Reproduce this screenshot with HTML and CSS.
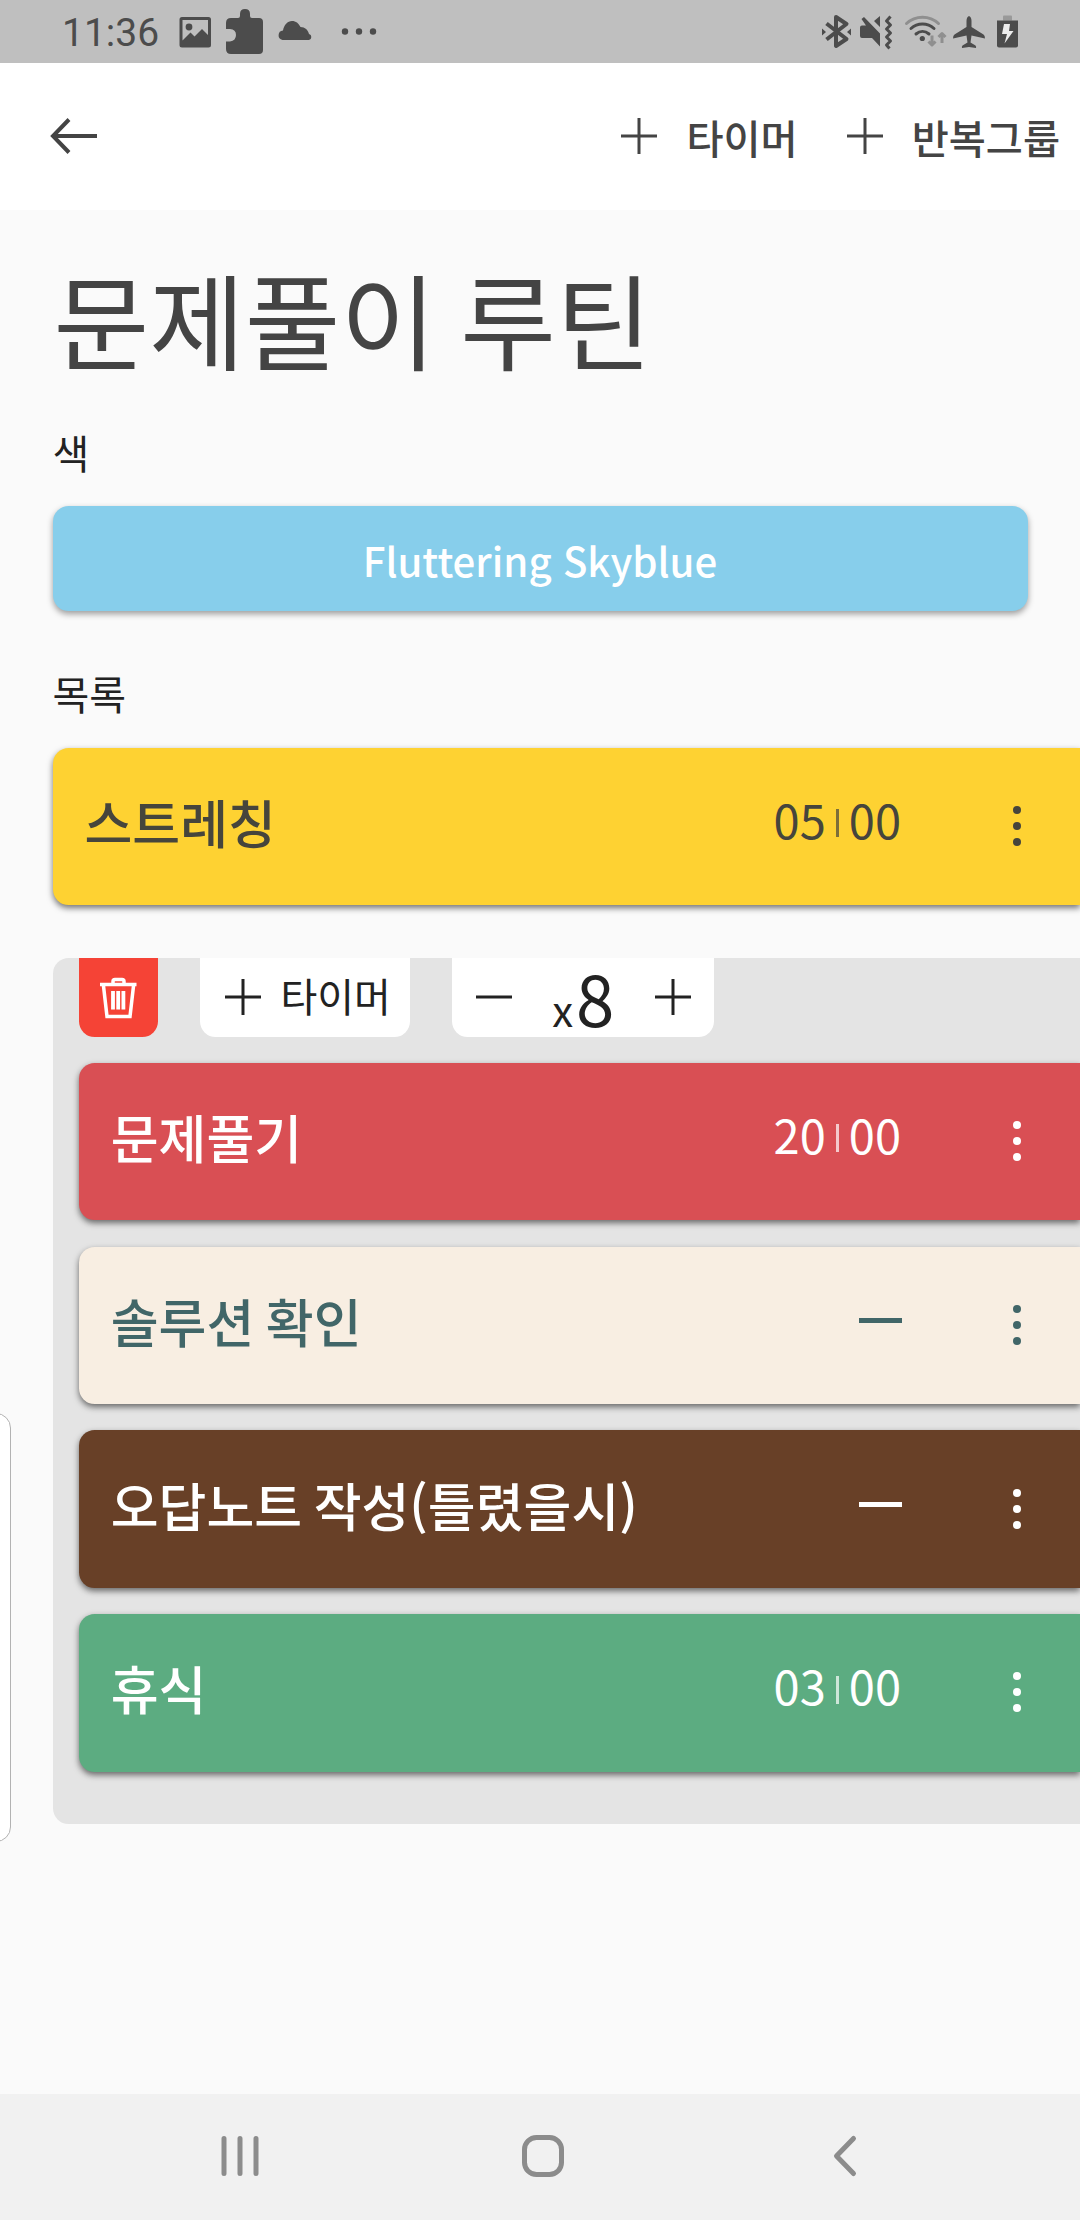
FILE: index.html
```html
<!DOCTYPE html>
<html lang="ko">
<head>
<meta charset="utf-8">
<title>문제풀이 루틴</title>
<link rel="stylesheet" href="styles.css">
</head>
<body>
<div class="screen">
  <header class="status">
    <span class="clock">11:36</span>
    <svg class="status-left" viewBox="170 0 220 63" width="220" height="63">
      <path fill-rule="evenodd" d="M182 17h26.500q2.500 0 2.500 2.500v25.500q0 2.500-2.500 2.500h-26.500q-2.500 0-2.500-2.500v-25.500q0-2.500 2.500-2.500zM182.500 20v20.500l8-8 4 4 7.500-7.500 6 6V20z"/>
      <circle cx="189" cy="27" r="3.400"/>
      <path d="M231 18h7q2 0 2-2v-2q0-5 5-5t5 5v2q0 2 2 2h7q4 0 4 4v28q0 4-4 4h-28q-5 0-5-5v-7.500h4q6-1 6-6.500t-6-6h-4V23q0-5 5-5z"/>
      <path d="M282.500 40a4.800 4.800 0 0 1 .5-9.500C284 25 287.500 21 292 21c4 0 6.500 2.300 8.500 6 4.500 0 7.500 3 8.500 7a3.100 3.100 0 0 1 0 6z"/>
      <circle cx="345" cy="31.500" r="3.200"/><circle cx="359" cy="31.500" r="3.200"/><circle cx="373" cy="31.500" r="3.200"/>
    </svg>
    <svg class="status-right" viewBox="815 0 265 63" width="265" height="63">
      <path class="line" d="M826.500 23.500l20 15.500-10.500 7V17l10.500 7-20 15.500"/>
      <path d="M822 28.500v7l4-3.500zM851 28.500v7l-4-3.500z"/>
      <path d="M862 25.500h4l-4.500-6.500 2.500-2 16 16.500v13l-8-8.500h-10q-2 0-2-2v-8.500q0-2 2-2zM874 21l6-5v11z"/>
      <path class="line thin" d="M890.500 16.500l-4 4.500 4 4-4 4 4 4-4 4 4 4-4 4 3 3.500"/>
      <path class="line arc dim" d="M906.500 23.500c9-8.500 23-8.500 32 0"/>
      <path class="line arc" d="M911 28.500c6.500-6 16.500-6 23 0M916 34c4-3.500 9-3.500 13 0"/>
      <circle cx="922.300" cy="38.500" r="2.600"/>
      <path class="line thin dim" d="M932 35.500v9M928.500 41.500l3.500 3.500 3.500-3.500M942 43v-9M938.500 37l3.500-3.500 3.500 3.500"/>
      <path d="M969 16q2.500 1 2.500 5v6l12 7.500q1.500 1 1.500 4l-13.500-3-1 7 5 3q1 1 .5 2.500l-7-1-7 1q-.5-1.500.5-2.500l5-3-1-7-13.500 3q0-3 1.500-4l12-7.500v-6q0-4 2.500-5z"/>
      <path class="cap" d="M1004 15.500h7q1 0 1 1v4h-9v-4q0-1 1-1z"/>
      <path d="M997 20.500h21v25q0 2-2 2h-17q-2 0-2-2z"/>
      <path class="bolt" d="M1004 24h6l-1 7h4.500l-9 12.500 2.500-9.500h-5z"/>
    </svg>
  </header>

  <nav class="appbar">
    <svg class="back" viewBox="50 115 50 42" width="50" height="42"><path d="M97 136H54M69 119.500L53 136l16 16.500"/></svg>
    <div class="actions">
      <span class="action"><svg class="plus" viewBox="0 0 38 38" width="38" height="38"><path d="M1 19h36M19 1v36"/></svg><span>타이머</span></span>
      <span class="action"><svg class="plus" viewBox="0 0 38 38" width="38" height="38"><path d="M1 19h36M19 1v36"/></svg><span>반복그룹</span></span>
    </div>
  </nav>

  <main class="content">
    <h1 class="title">문제풀이 루틴</h1>
    <h2 class="label">색</h2>
    <button class="color-button">Fluttering Skyblue</button>
    <h2 class="label">목록</h2>

    <article class="card yellow">
      <span class="name">스트레칭</span>
      <span class="time"><span>05</span><i class="bar"></i><span>00</span></span>
      <span class="more"><i></i><i></i><i></i></span>
    </article>

    <section class="group">
      <div class="tools">
        <span class="tool delete"><svg viewBox="98 975 40 45" width="40" height="45"><path d="M100 984.500h36.500M113 984v-2.500q0-2 2-2h7q2 0 2 2v2.500M103.500 986l3.500 30.500h23l3.500-30.500"/><path class="slats" d="M113 991v18.500M118.200 991v18.500M123.400 991v18.500"/></svg></span>
        <span class="tool add"><svg class="plus" viewBox="0 0 38 38" width="38" height="38"><path d="M1 19h36M19 1v36"/></svg><span>타이머</span></span>
        <span class="tool counter">
          <svg class="plus" viewBox="0 0 38 38" width="38" height="38"><path d="M1 19h36"/></svg>
          <span class="count"><small>x</small>8</span>
          <svg class="plus" viewBox="0 0 38 38" width="38" height="38"><path d="M1 19h36M19 1v36"/></svg>
        </span>
      </div>
      <article class="card red">
        <span class="name">문제풀기</span>
        <span class="time"><span>20</span><i class="bar"></i><span>00</span></span>
        <span class="more"><i></i><i></i><i></i></span>
      </article>
      <article class="card cream">
        <span class="name">솔루션 확인</span>
        <span class="dash"></span>
        <span class="more"><i></i><i></i><i></i></span>
      </article>
      <article class="card brown">
        <span class="name">오답노트 작성(틀렸을시)</span>
        <span class="dash"></span>
        <span class="more"><i></i><i></i><i></i></span>
      </article>
      <article class="card green">
        <span class="name">휴식</span>
        <span class="time"><span>03</span><i class="bar"></i><span>00</span></span>
        <span class="more"><i></i><i></i><i></i></span>
      </article>
    </section>
  </main>

  <div class="edge-handle"></div>

  <footer class="navbar">
    <svg viewBox="216 2130 48 52" width="48" height="52"><path d="M224 2138.500v35M240 2138.500v35M256 2138.500v35"/></svg>
    <svg viewBox="518 2130 48 52" width="48" height="52"><rect x="523.500" y="2137.500" width="37" height="37" rx="12"/></svg>
    <svg viewBox="822 2130 48 52" width="48" height="52"><path d="M853.500 2138.500L836.500 2156l17 17.500"/></svg>
  </footer>
</div>
</body>
</html>
```

FILE: styles.css
```css
* { box-sizing: border-box; }
body {
  margin: 0;
  font-family: "Noto Sans CJK KR", "Noto Sans", sans-serif;
  background: #fafafa;
}
.screen {
  position: relative;
  width: 1080px;
  height: 2220px;
  display: flex;
  flex-direction: column;
  overflow: hidden;
  background: #fafafa;
}
svg { display: block; flex: none; }

.status {
  height: 63px;
  display: flex;
  align-items: center;
  justify-content: space-between;
  background: #bfbfbf;
  padding-left: 62px;
}
.clock {
  width: 108px;
  font: 400 39px/46px Roboto, sans-serif;
  color: #4c4c4c;
  padding-top: 3px;
}
.status svg { fill: #4c4c4c; }
.status-right { margin-left: auto; }
.status .line { fill: none; stroke: #4c4c4c; stroke-width: 4; stroke-linejoin: round; }
.status .thin { stroke-width: 3; }
.status .arc { stroke-width: 3; stroke-linecap: round; }
.status .dim { stroke: #8f8f8f; }
.status .cap { fill: #999; }
.status .bolt { fill: #ececec; }

.appbar {
  height: 147px;
  display: flex;
  align-items: center;
  justify-content: space-between;
  background: #fff;
  padding: 0 20px 1px 50px;
}
.back path { fill: none; stroke: #444; stroke-width: 4; }
.actions { display: flex; gap: 48px; }
.action {
  display: flex;
  align-items: center;
  gap: 28px;
  font-size: 40.300px;
  font-weight: 500;
  line-height: 58px;
  color: #444;
}
.action span { padding-top: 2px; }
.plus path { fill: none; stroke: currentColor; stroke-width: 3; }

.content {
  flex: 1;
  padding: 32px 0 0 52.500px;
}
.title {
  margin: 0 0 28.750px;
  padding-left: 1px;
  font-size: 104px;
  font-weight: 400;
  line-height: 152px;
  word-spacing: -5px;
  color: #444;
}
.label {
  margin: 0 0 25.500px;
  font-size: 40px;
  font-weight: 400;
  line-height: 58px;
  color: #222;
}
.color-button {
  display: block;
  width: 975px;
  height: 105px;
  margin: 0 0 53px;
  padding: 3px 0 0;
  border: 0;
  border-radius: 15.750px;
  background: #87ceeb;
  box-shadow: 0 3px 6px rgba(0, 0, 0, .38);
  color: #fff;
  font: 500 40.200px/58px "Noto Sans CJK KR", sans-serif;
}

.card {
  height: 157.500px;
  display: flex;
  align-items: center;
  padding-left: 32px;
  border-radius: 15.750px 0 0 15.750px;
  box-shadow: 0 3px 6px rgba(0, 0, 0, .55);
}
.name {
  flex: 1;
  font-size: 52px;
  font-weight: 500;
  line-height: 76px;
  word-spacing: -3px;
  padding-bottom: 9px;
}
.time {
  display: flex;
  align-items: center;
  gap: 10.300px;
  font-size: 47px;
  line-height: 68px;
  padding-bottom: 15px;
  margin-right: 112px;
}
.bar { width: 2.500px; height: 28px; background: currentColor; opacity: .7; margin-top: 8.500px; }
.dash { width: 43px; height: 5px; background: currentColor; margin: 0 111px 10px 0; }
.more { width: 8px; display: flex; flex-direction: column; gap: 8px; margin: 0 59px 1px 0; }
.more i { width: 8px; height: 8px; border-radius: 50%; background: currentColor; }

.yellow { background: #fed232; color: #46453c; }
.red { background: #d94f54; color: #fff; }
.cream { background: #f8eee2; color: #416668; }
.brown { background: #684027; color: #fff; }
.green { background: #5cac81; color: #fff; }

.group {
  margin-top: 52.500px;
  padding: 0 0 52.500px 26.250px;
  display: flex;
  flex-direction: column;
  gap: 26.250px;
  background: #e4e4e4;
  border-radius: 15.750px 0 0 15.750px;
}
.tools { display: flex; gap: 42px; color: #222; }
.tool {
  height: 78.750px;
  display: flex;
  align-items: center;
  background: #fff;
  border-radius: 0 0 15.750px 15.750px;
}
.delete { width: 78.750px; background: #f54336; justify-content: center; }
.delete path { fill: none; stroke: #fff; stroke-width: 3.500; }
.delete .slats { stroke-width: 3.800; }
.add { width: 210px; padding-left: 24px; gap: 19px; font-size: 40px; line-height: 58px; }
.add span { padding-bottom: 4px; }
.counter { width: 262.500px; justify-content: space-between; padding: 0 22px 0 23px; }
.count { font-size: 69px; line-height: 78px; padding-top: 11px; white-space: nowrap; }
.count small { font-size: 42px; margin-right: 3px; }

.edge-handle {
  position: absolute;
  left: -20px;
  top: 1413px;
  width: 31px;
  height: 429px;
  border: 1.500px solid #b2b2b2;
  border-radius: 15px;
  background: #fff;
}

.navbar {
  height: 126px;
  display: flex;
  align-items: center;
  justify-content: space-between;
  padding: 0 210px 2px 216px;
  background: #f1f1f1;
}
.navbar path, .navbar rect { fill: none; stroke: #8c8c8c; stroke-width: 5; stroke-linecap: round; stroke-linejoin: round; }
```
